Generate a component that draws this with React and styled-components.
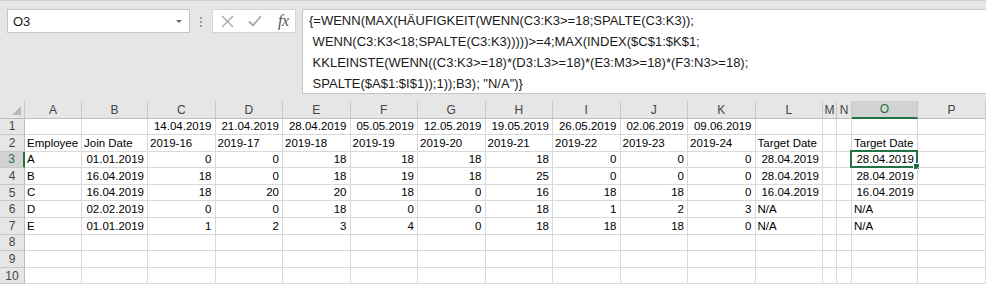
import React from 'react';
import styled, { createGlobalStyle } from 'styled-components';

const GlobalStyle = createGlobalStyle`
  html, body {
    margin: 0;
    padding: 0;
    background: #ffffff;
    overflow: hidden;
  }
  body {
    font-family: "Liberation Sans", Arial, sans-serif;
  }
`;

const GREEN = '#217346';
const GRID = '#d9d9d9';
const HEAD_LINE = '#c8c8c8';

const Sheet = styled.div`
  width: 986px;
  height: 285px;
  overflow: hidden;
  background: #fff;
`;

const Band = styled.div`
  display: flex;
  align-items: flex-start;
  height: 101px;
  box-sizing: border-box;
  padding: 8px 0 0 7px;
  background: #e6e6e6;
  border-top: 1px solid #d0d0d0;
`;

const NameBox = styled.div`
  width: 183px;
  height: 24px;
  box-sizing: border-box;
  display: flex;
  align-items: center;
  justify-content: space-between;
  padding: 0 5px 0 5px;
  background: #fff;
  border: 1px solid #c6c6c6;
  font-size: 13px;
  color: #1a1a1a;
`;

const Caret = styled.span`
  width: 0;
  height: 0;
  border-left: 3px solid transparent;
  border-right: 3px solid transparent;
  border-top: 3px solid #6a6a6a;
  margin-right: 2px;
`;

const Grip = styled.div`
  display: flex;
  flex-direction: column;
  gap: 2px;
  margin: 8px 10px 0 10px;

  span {
    width: 2px;
    height: 2px;
    background: #9a9a9a;
  }
`;

const FxGroup = styled.div`
  width: 84px;
  height: 24px;
  box-sizing: border-box;
  display: flex;
  align-items: center;
  gap: 14px;
  padding-left: 8px;
  background: #fff;
  border: 1px solid #d4d4d4;
`;

const Fx = styled.span`
  font-family: "Liberation Serif", "Times New Roman", serif;
  font-style: italic;
  font-size: 16px;
  color: #555;
  letter-spacing: -0.5px;
  margin-left: 2px;
`;

const FormulaBox = styled.div`
  flex: 1;
  height: 85px;
  box-sizing: border-box;
  margin-left: 6px;
  padding: 0 0 0 6px;
  background: #fff;
  border: 1px solid #c6c6c6;
  border-right: none;
  font-size: 13px;
  line-height: 21px;
  color: #1a1a1a;
  white-space: pre;
`;

const Grid = styled.div`
  display: grid;
  grid-template-columns: 25px 57px 66px repeat(10, 67.5px) 14px 15px 66px 1fr;
  grid-template-rows: 17.5px repeat(10, 16.6px);
  font-size: 11.5px;
  color: #000;
`;

const Corner = styled.div`
  position: relative;
  background: #e6e6e6;
  border-right: 1px solid ${HEAD_LINE};
  border-bottom: 1px solid #bdbdbd;

  &::after {
    content: '';
    position: absolute;
    right: 3px;
    bottom: 3px;
    border-left: 9px solid transparent;
    border-bottom: 9px solid #b8b8b8;
  }
`;

const ColHead = styled.div`
  box-sizing: border-box;
  display: flex;
  align-items: center;
  justify-content: center;
  background: ${p => (p.$active ? '#d2d2d2' : '#e6e6e6')};
  color: ${p => (p.$active ? GREEN : '#444')};
  border-right: 1px solid ${HEAD_LINE};
  border-bottom: ${p => (p.$active ? `2px solid ${GREEN}` : '1px solid #bdbdbd')};
  font-size: 12px;
  padding-top: 1px;
`;

const RowHead = styled.div`
  box-sizing: border-box;
  display: flex;
  align-items: center;
  justify-content: center;
  background: ${p => (p.$active ? '#d2d2d2' : '#e6e6e6')};
  color: ${p => (p.$active ? GREEN : '#444')};
  border-right: ${p => (p.$active ? `2px solid ${GREEN}` : '1px solid #bdbdbd')};
  border-bottom: 1px solid ${HEAD_LINE};
  font-size: 12px;
`;

const Cell = styled.div`
  position: relative;
  box-sizing: border-box;
  display: flex;
  align-items: flex-end;
  justify-content: ${p => (p.$right ? 'flex-end' : 'flex-start')};
  padding: 0 3px 1px 2px;
  border-right: 1px solid ${GRID};
  border-bottom: 1px solid ${GRID};
  white-space: nowrap;
  overflow: ${p => (p.$selected ? 'visible' : 'hidden')};
  line-height: 14px;
`;

const Selection = styled.div`
  position: absolute;
  top: -2px;
  left: -2px;
  right: -1px;
  bottom: -1px;
  border: 2px solid ${GREEN};
  pointer-events: none;

  &::after {
    content: '';
    position: absolute;
    right: -4px;
    bottom: -4px;
    width: 5px;
    height: 5px;
    background: ${GREEN};
    border: 1px solid #fff;
  }
`;

const COLS = ['A', 'B', 'C', 'D', 'E', 'F', 'G', 'H', 'I', 'J', 'K', 'L', 'M', 'N', 'O', 'P'];

const ROWS = [
  ['', '', '14.04.2019', '21.04.2019', '28.04.2019', '05.05.2019', '12.05.2019', '19.05.2019', '26.05.2019', '02.06.2019', '09.06.2019', '', '', '', '', ''],
  ['Employee', 'Join Date', '2019-16', '2019-17', '2019-18', '2019-19', '2019-20', '2019-21', '2019-22', '2019-23', '2019-24', 'Target Date', '', '', 'Target Date', ''],
  ['A', '01.01.2019', '0', '0', '18', '18', '18', '18', '0', '0', '0', '28.04.2019', '', '', '28.04.2019', ''],
  ['B', '16.04.2019', '18', '0', '18', '19', '18', '25', '0', '0', '0', '28.04.2019', '', '', '28.04.2019', ''],
  ['C', '16.04.2019', '18', '20', '20', '18', '0', '16', '18', '18', '0', '16.04.2019', '', '', '16.04.2019', ''],
  ['D', '02.02.2019', '0', '0', '18', '0', '0', '18', '1', '2', '3', 'N/A', '', '', 'N/A', ''],
  ['E', '01.01.2019', '1', '2', '3', '4', '0', '18', '18', '18', '0', 'N/A', '', '', 'N/A', ''],
  [], [], [],
];

const FORMULA = [
  '{=WENN(MAX(HÄUFIGKEIT(WENN(C3:K3>=18;SPALTE(C3:K3));',
  ' WENN(C3:K3<18;SPALTE(C3:K3)))))>=4;MAX(INDEX($C$1:$K$1;',
  ' KKLEINSTE(WENN((C3:K3>=18)*(D3:L3>=18)*(E3:M3>=18)*(F3:N3>=18);',
  ' SPALTE($A$1:$I$1));1));B3); "N/A")}',
];

const isNumber = v => /^\d+(\.\d+)*$/.test(v);

const ACTIVE_COL = 14;
const ACTIVE_ROW = 2;

export default function App() {
  return (
    <Sheet>
      <GlobalStyle />
      <Band>
        <NameBox>
          <span>O3</span>
          <Caret />
        </NameBox>
        <Grip>
          <span />
          <span />
          <span />
        </Grip>
        <FxGroup>
          <svg width="13" height="13" viewBox="0 0 13 13">
            <path d="M1 1 L12 12 M12 1 L1 12" stroke="#a6a6a6" strokeWidth="1.3" fill="none" />
          </svg>
          <svg width="14" height="12" viewBox="0 0 14 12">
            <path d="M1 6.5 L5 10.5 L13 1" stroke="#a6a6a6" strokeWidth="1.8" fill="none" />
          </svg>
          <Fx>fx</Fx>
        </FxGroup>
        <FormulaBox>{FORMULA.join('\n')}</FormulaBox>
      </Band>
      <Grid>
        <Corner />
        {COLS.map((c, i) => (
          <ColHead key={c} $active={i === ACTIVE_COL}>{c}</ColHead>
        ))}
        {ROWS.map((row, r) => (
          <React.Fragment key={r}>
            <RowHead $active={r === ACTIVE_ROW}>{r + 1}</RowHead>
            {COLS.map((c, i) => {
              const v = row[i] || '';
              const selected = r === ACTIVE_ROW && i === ACTIVE_COL;
              return (
                <Cell key={c} $right={isNumber(v)} $selected={selected}>
                  {v}
                  {selected && <Selection />}
                </Cell>
              );
            })}
          </React.Fragment>
        ))}
      </Grid>
    </Sheet>
  );
}
